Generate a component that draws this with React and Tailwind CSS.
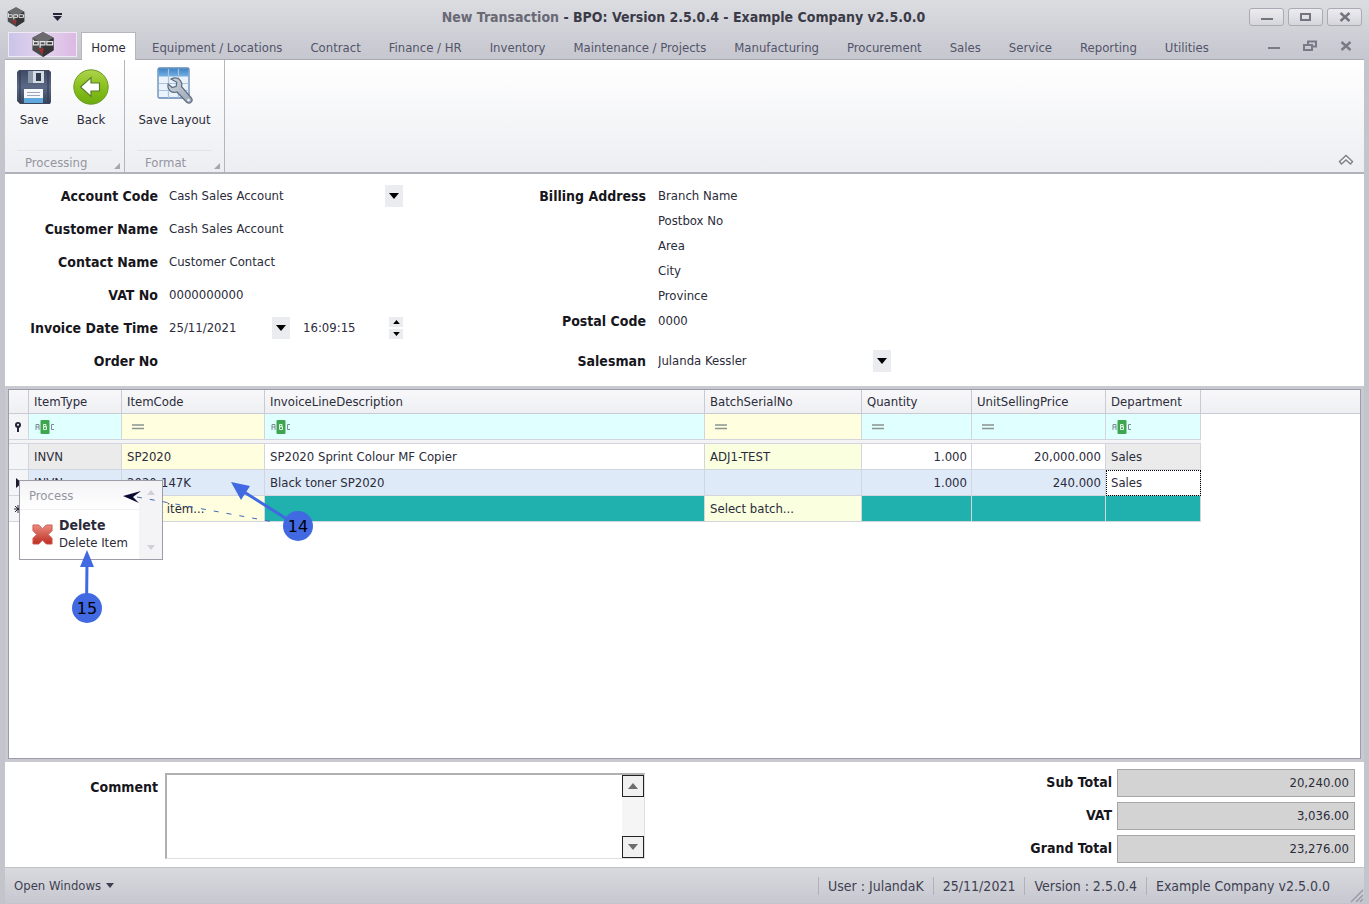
import React from "react";

const rowsTop = [
  ["Account Code", "Cash Sales Account", "account"],
  ["Customer Name", "Cash Sales Account", "customer"],
  ["Contact Name", "Customer Contact", "contact"],
  ["VAT No", "0000000000", "vat"],
];
const tabs = ["Equipment / Locations", "Contract", "Finance / HR", "Inventory", "Maintenance / Projects", "Manufacturing", "Procurement", "Sales", "Service", "Reporting", "Utilities"];

function Hex({ className }) {
  return (
    <svg viewBox="0 0 24 26" className={className} aria-hidden="true">
      <path d="M12 0 23 6v13l-11 7L1 19V6z" fill="#4a4a4c" />
      <path d="M12 0 23 6 12 12 1 6z" fill="#6b6b6d" />
      <path d="M12 12 23 6v13l-11 7z" fill="#353537" />
      <path d="M2 8v5.500h5v-3.500H2M9 16.500V10h5v3.500H9M16 10h6v3.500h-6z" fill="none" stroke="#e4e4e4" strokeWidth="1.300" />
      <path d="m8 17 3 4 1-4" fill="none" stroke="#b02a2a" strokeWidth="1.800" />
    </svg>
  );
}
function Down({ size = "h-[6px] w-[10px]" }) {
  return <svg viewBox="0 0 10 6" className={size} aria-hidden="true"><path d="M0 0h10L5 6z" fill="currentColor" /></svg>;
}
function Up({ size = "h-[6px] w-[10px]" }) {
  return <svg viewBox="0 0 10 6" className={size} aria-hidden="true"><path d="M0 6h10L5 0z" fill="currentColor" /></svg>;
}
function Disk() {
  return (
    <svg viewBox="0 0 34 34" className="size-[34px]" aria-hidden="true">
      <defs><linearGradient id="dk" x1="0" y1="0" x2="0" y2="1"><stop offset="0" stopColor="#3f4a64" /><stop offset=".5" stopColor="#5b6986" /><stop offset="1" stopColor="#39435b" /></linearGradient></defs>
      <path d="M2 0h30l2 2v30l-1 2H3l-3-3V2z" fill="url(#dk)" />
      <path d="M3 1v32M31 1v32" stroke="#2f384e" strokeWidth="1" />
      <path d="M11 1h16v12H11z" fill="#d5dbe3" />
      <path d="M11 1h5v12h-5z" fill="#8a97ab" />
      <path d="M19 3h5v8h-5z" fill="#313b52" />
      <path d="M7 19h19v14H7z" fill="#f6f8fb" />
      <path d="M7 28h19v5H7z" fill="#5fa9df" />
      <path d="M10 22.500h13M10 25.500h13" stroke="#9ba6b8" />
    </svg>
  );
}
function Back() {
  return (
    <svg viewBox="0 0 36 36" className="size-[36px]" aria-hidden="true">
      <defs><linearGradient id="bk" x1="0" y1="0" x2="0" y2="1"><stop offset="0" stopColor="#b0d24e" /><stop offset=".45" stopColor="#8cc320" /><stop offset="1" stopColor="#6cab0c" /></linearGradient></defs>
      <circle cx="18" cy="18" r="17.200" fill="url(#bk)" stroke="#6b9a2a" />
      <path d="M7.500 18 18 8.500v5.500h8.500v8H18v5.500z" fill="#fff" stroke="#5c7c2c" strokeWidth="1.200" />
    </svg>
  );
}
function Layout() {
  return (
    <svg viewBox="0 0 36 38" className="h-[38px] w-[36px]" aria-hidden="true">
      <defs>
        <linearGradient id="lh" x1="0" y1="0" x2="0" y2="1"><stop offset="0" stopColor="#3f82c4" /><stop offset="1" stopColor="#74b0e2" /></linearGradient>
        <linearGradient id="lw" x1="0" y1="0" x2="1" y2="1"><stop offset="0" stopColor="#d0d7e0" /><stop offset="1" stopColor="#98a4b3" /></linearGradient>
      </defs>
      <rect x="1" y="1" width="31" height="30" rx="1.500" fill="#eaf2fb" stroke="#6288b5" strokeWidth="1.300" />
      <path d="M1.500 1.500h30v8h-30z" fill="url(#lh)" />
      <path d="M11.500 2v29M21.500 2v29M2 16.500h30M2 23.500h30" stroke="#a9c2de" strokeWidth="1.200" />
      <path d="M14 12c4-2 8-1 10 2.500 1 2 1 3.700 .4 5L34.500 31c2 3-1.500 6.500-4.500 4.500L20 25c-3.500 1-7-.3-8.500-3.500-.7-1.500-.7-3-.3-4.500l4 3.500 4-1.300 .6-4z" fill="url(#lw)" stroke="#5c6a7d" strokeWidth="1.200" />
      <circle cx="31.500" cy="33" r="1.300" fill="#eef1f4" />
    </svg>
  );
}
function Abc() {
  return (
    <svg viewBox="0 0 20 14" className="ml-px h-[14px] w-[20px]" role="img" aria-label="Text filter">
      <rect x="5.500" y="0" width="9" height="14" rx="1" fill="#3fa650" />
      <path d="M1 10V4.500h3V10M1 7h3" fill="none" stroke="#7c8c92" />
      <path d="M8.500 4.500H11v2.200H8.500zM8.500 6.700h3v2.800h-3z" fill="none" stroke="#e6f7e6" />
      <path d="M19 4.500h-2.500v5H19" fill="none" stroke="#7c8c92" />
    </svg>
  );
}
function Eq() {
  return <svg viewBox="0 0 12 6" className="ml-[5px] h-[6px] w-[12px]" role="img" aria-label="Equals filter"><path d="M0 1h12M0 4.500h12" stroke="#8b9490" strokeWidth="1.300" /></svg>;
}
function WinButton({ label, children }) {
  return <button aria-label={label} className="flex h-[18px] w-[35px] items-center justify-center rounded-[3px] border border-[#a9aab3] bg-linear-to-b from-[#ececf0] to-[#d5d5dc] text-[#73747f]">{children}</button>;
}
function DropButton({ label }) {
  return <button type="button" aria-label={label} className="flex h-[22px] w-[18px] items-center justify-center bg-[#ebecef] text-black"><Down /></button>;
}
function Group({ title, children }) {
  return (
    <section className="flex flex-col border-r border-[#b4b5bd] px-[6px]">
      <div className="flex flex-1 pt-[7px]">{children}</div>
      <div className="relative mx-[6px] h-[22px] border-t border-[#e3e4e9] pl-[8px] leading-[24px] text-[#94959f]">
        {title}
        <svg viewBox="0 0 6 6" className="absolute -right-[8px] bottom-[3px] size-[6px]" aria-hidden="true"><path d="M6 0v6H0z" fill="#a4a5ad" /></svg>
      </div>
    </section>
  );
}
const cell = "border-r border-b border-[#d3d5de] py-0 pr-[4px] pl-[5px]";
const hd = "border-r border-b border-[#c9cad3] py-0 pr-[4px] pl-[5px] text-left font-normal";
const lbl = "text-right text-[14px] font-bold text-[#16161c]";
const inp = "h-[22px] min-w-0 bg-transparent p-0 outline-none";

export default function App() {
  return (
    <div className="relative flex min-h-screen flex-col border-x-[5px] border-b border-[#c3c4cc] bg-white font-['DejaVu_Sans_Condensed','DejaVu_Sans',sans-serif] text-[13px] leading-[18px] text-[#2b2b3a]">
      <header className="-mx-[5px] bg-linear-to-b from-[#dcdde1] to-[#c5c6ce] px-[5px]">
        <div className="flex h-[33px] items-center">
          <Hex className="ml-[2px] h-[20px] w-[18px]" />
          <button aria-label="Customize toolbar" className="ml-[28px] flex flex-col items-center gap-px text-[#25253a]">
            <span className="h-[2px] w-[9px] bg-current" />
            <svg viewBox="0 0 9 5" className="h-[5px] w-[9px]" aria-hidden="true"><path d="M0 0h9L4.500 5z" fill="currentColor" /></svg>
          </button>
          <h1 className="flex-1 pl-[68px] pr-[12px] text-center text-[14px] font-bold text-[#3b3b48]"><span className="text-[#686975]">New Transaction</span> - BPO: Version 2.5.0.4 - Example Company v2.5.0.0</h1>
          <div className="flex gap-[4px] pr-[2px]">
            <WinButton label="Minimize"><span className="mt-[5px] h-[2px] w-[12px] bg-current" /></WinButton>
            <WinButton label="Maximize"><span className="h-[8px] w-[11px] border-2 border-current" /></WinButton>
            <WinButton label="Close"><svg viewBox="0 0 12 10" className="h-[10px] w-[12px]" aria-hidden="true"><path d="m1.500 1 9 8m0-8-9 8" stroke="currentColor" strokeWidth="2.400" /></svg></WinButton>
          </div>
        </div>
        <nav className="flex h-[27px] items-end border-b border-[#a9aab3] text-[#53546a]">
          <button aria-label="Application menu" className="mr-[4px] mb-[2px] ml-[3px] flex h-[25px] w-[69px] items-center justify-center border border-[#f0e8f5] bg-linear-to-r from-[#cbc4e8] via-[#e2d3ee] to-[#dcb9e3]"><Hex className="h-[25px] w-[24px]" /></button>
          <button className="-mb-px h-[28px] w-[55px] border border-b-0 border-[#b5b6be] bg-white pt-[2px] text-[#2b2b3a]">Home</button>
          <div className="flex h-[27px] flex-1 items-center gap-[28px] pt-[5px] pl-[16px]">
            {tabs.map((t) => <button key={t} className="whitespace-nowrap">{t}</button>)}
          </div>
          <div className="flex h-[27px] items-center gap-[23px] pr-[12px] text-[#797a85]">
            <button aria-label="Minimize document"><span className="mt-[5px] block h-[2px] w-[12px] bg-current" /></button>
            <button aria-label="Restore document"><svg viewBox="0 0 14 12" className="h-[12px] w-[14px]" aria-hidden="true"><path d="M1 5h8v5H1zM5 4V1.500h8v5h-3" fill="none" stroke="currentColor" strokeWidth="2" /></svg></button>
            <button aria-label="Close document"><svg viewBox="0 0 12 10" className="h-[10px] w-[12px]" aria-hidden="true"><path d="m1.500 1 9 8m0-8-9 8" stroke="currentColor" strokeWidth="2.400" /></svg></button>
          </div>
        </nav>
      </header>

      <div className="flex h-[114px] border-b-2 border-[#b1b2ba] bg-linear-to-b from-white to-[#edeef2]">
        <Group title="Processing">
          <button className="flex h-[62px] w-[46px] flex-col items-center justify-between pt-[3px]"><Disk /><span>Save</span></button>
          <button className="mr-[4px] ml-[11px] flex h-[62px] w-[46px] flex-col items-center justify-between pt-[2px]"><Back /><span>Back</span></button>
        </Group>
        <Group title="Format">
          <button className="flex h-[62px] w-[87px] flex-col items-center justify-between whitespace-nowrap"><Layout /><span>Save Layout</span></button>
        </Group>
        <button aria-label="Collapse ribbon" className="mt-auto mr-[10px] mb-[6px] ml-auto text-[#7e7f89]">
          <svg viewBox="0 0 16 12" className="h-[12px] w-[16px]" aria-hidden="true"><path d="M1.500 7.500 8 1.500l6.500 6-2 2.500L8 6l-4.500 4z" fill="#f4f4f7" stroke="currentColor" strokeWidth="1.400" /></svg>
        </button>
      </div>

      <form className="flex h-[212px] pt-[11px] leading-[22px]">
        <div className="grid w-[483px] auto-rows-[33px] grid-cols-[153px_1fr] gap-x-[11px]">
          {rowsTop.map(([l, v, id]) => (
            <React.Fragment key={id}>
              <label htmlFor={id} className={lbl}>{l}</label>
              <div className="flex items-start">
                <input id={id} defaultValue={v} className={inp + " w-[216px]"} />
                {id === "account" && <DropButton label="Choose account" />}
              </div>
            </React.Fragment>
          ))}
          <label htmlFor="date" className={lbl}>Invoice Date Time</label>
          <div className="flex items-start">
            <input id="date" defaultValue="25/11/2021" className={inp + " w-[103px]"} />
            <DropButton label="Choose date" />
            <input aria-label="Invoice time" defaultValue="16:09:15" className={inp + " ml-[13px] w-[86px]"} />
            <span className="flex flex-col gap-[2px]">
              <button type="button" aria-label="Later" className="flex h-[10px] w-[14px] items-center justify-center bg-[#ebecef] text-black"><Up size="h-[4px] w-[7px]" /></button>
              <button type="button" aria-label="Earlier" className="flex h-[10px] w-[14px] items-center justify-center bg-[#ebecef] text-black"><Down size="h-[4px] w-[7px]" /></button>
            </span>
          </div>
          <label htmlFor="order" className={lbl}>Order No</label>
          <input id="order" className={inp} />
        </div>
        <div className="grid auto-rows-[25px] grid-cols-[158px_1fr] gap-x-[12px]">
          <label htmlFor="b0" className={lbl}>Billing Address</label>
          <input id="b0" defaultValue="Branch Name" className={inp} />
          {["Postbox No", "Area", "City", "Province"].map((t) => <input key={t} aria-label={t} defaultValue={t} className={inp + " col-start-2"} />)}
          <label htmlFor="postal" className={lbl}>Postal Code</label>
          <input id="postal" defaultValue="0000" className={inp} />
          <label htmlFor="salesman" className={lbl + " pt-[15px]"}>Salesman</label>
          <div className="flex items-start pt-[15px]">
            <input id="salesman" defaultValue="Julanda Kessler" className={inp + " w-[215px]"} />
            <DropButton label="Choose salesman" />
          </div>
        </div>
      </form>

      <main className="relative flex min-h-[376px] flex-1 border-[3px] border-[#c8c9d1] bg-white">
        <div className="flex-1 border border-[#9c9da8]">
          <div className="flex">
            <table className="w-[1192px] table-fixed border-separate border-spacing-0">
              <colgroup><col className="w-[20px]" /><col className="w-[93px]" /><col className="w-[143px]" /><col className="w-[440px]" /><col className="w-[157px]" /><col className="w-[110px]" /><col className="w-[134px]" /><col className="w-[95px]" /></colgroup>
              <thead>
                <tr className="h-[24px] bg-linear-to-b from-[#f8f8fa] to-[#eeeff2]">
                  <th className={hd} aria-label="Row state"></th>
                  {["ItemType", "ItemCode", "InvoiceLineDescription", "BatchSerialNo", "Quantity", "UnitSellingPrice", "Department"].map((h) => <th key={h} className={hd}>{h}</th>)}
                </tr>
              </thead>
              <tbody>
                <tr className="h-[26px] bg-[#e0ffff]">
                  <td className={cell + " bg-[#f4f5f7]"}><svg viewBox="0 0 8 10" className="h-[10px] w-[8px]" aria-hidden="true"><circle cx="4" cy="3" r="3" fill="#25253a" /><circle cx="4" cy="2.800" r="1" fill="#fff" /><path d="M4 5v5" stroke="#25253a" strokeWidth="2" /></svg></td>
                  <td className={cell}><Abc /></td><td className={cell + " bg-[#ffffe0]"}><Eq /></td><td className={cell}><Abc /></td><td className={cell + " bg-[#ffffe0]"}><Eq /></td><td className={cell}><Eq /></td><td className={cell}><Eq /></td><td className={cell}><Abc /></td>
                </tr>
                <tr className="h-[4px]"><td colSpan={8} className="border-b border-[#d3d5de] bg-[#f4f4f7] p-0"></td></tr>
                <tr className="h-[26px]">
                  <td className={cell + " bg-[#f4f5f7]"}></td><td className={cell + " bg-[#ebebeb]"}>INVN</td><td className={cell + " bg-[#ffffe0]"}>SP2020</td><td className={cell}>SP2020 Sprint Colour MF Copier</td><td className={cell + " bg-[#faffe0]"}>ADJ1-TEST</td><td className={cell + " text-right"}>1.000</td><td className={cell + " text-right"}>20,000.000</td><td className={cell + " bg-[#ebebeb]"}>Sales</td>
                </tr>
                <tr className="h-[26px] bg-[#dfeaf8]">
                  <td className={cell + " bg-[#f4f5f7]"}><svg viewBox="0 0 6 10" className="ml-[2px] h-[10px] w-[6px]" aria-hidden="true"><path d="M0 0v10l6-5z" fill="#1c1c2a" /></svg></td><td className={cell}>INVN</td><td className={cell}>2020-147K</td><td className={cell}>Black toner SP2020</td><td className={cell}></td><td className={cell + " text-right"}>1.000</td><td className={cell + " text-right"}>240.000</td><td className={cell + " bg-white outline-1 -outline-offset-1 outline-dotted outline-black"}>Sales</td>
                </tr>
                <tr className="h-[26px] bg-[#20b0ae]">
                  <td className={cell + " bg-[#f4f5f7]"}>
                    <svg viewBox="0 0 8 8" className="h-[8px] w-[8px]" aria-hidden="true"><path d="M4 0v8M0 4h8M1 1l6 6M7 1 1 7" stroke="#2b2b3a" /></svg>
                  </td>
                  <td className={cell}></td><td className={cell + " bg-[#ffffe0]"}>Select item...</td><td className={cell}></td><td className={cell + " bg-[#faffe0]"}>Select batch...</td><td className={cell}></td><td className={cell}></td><td className={cell}></td>
                </tr>
              </tbody>
            </table>
            <div className="h-[24px] flex-1 border-b border-[#c9cad3] bg-linear-to-b from-[#f8f8fa] to-[#eeeff2]" />
          </div>
        </div>

        <div role="menu" className="absolute top-[91px] left-[11px] flex h-[80px] w-[144px] border border-[#9c9da8] bg-white">
          <div className="flex-1">
            <div className="h-[29px] border-b border-[#f0f0f3] bg-linear-to-b from-[#f3f3f6] to-white pl-[9px] leading-[30px] text-[#94959f]">Process</div>
            <button role="menuitem" className="flex items-center gap-[6px] pt-[7px] pl-[12px] text-left leading-[17px]">
              <svg viewBox="0 0 22 22" className="size-[21px]" aria-hidden="true">
                <defs><linearGradient id="rx" x1="0" y1="0" x2="0" y2="1"><stop offset="0" stopColor="#e98d80" /><stop offset="1" stopColor="#bd2c20" /></linearGradient></defs>
                <path d="M1 1h6l4 4 4-4h6v6l-4 4 4 4v6h-6l-4-4-4 4H1v-6l4-4-4-4z" fill="url(#rx)" stroke="#d0594e" />
              </svg>
              <span className="whitespace-nowrap"><b className="block text-[14px] leading-[17px]">Delete</b>Delete Item</span>
            </button>
          </div>
          <div className="flex w-[23px] flex-col items-center justify-between bg-[#f4f4f6] py-[9px] text-[#d0d1d7]"><Up size="h-[5px] w-[8px]" /><Down size="h-[5px] w-[8px]" /></div>
        </div>

        <svg viewBox="0 0 340 250" className="pointer-events-none absolute -top-[4px] -left-[8px] h-[250px] w-[340px]" aria-hidden="true">
          <path d="M137 112 274 137" stroke="#4169b5" strokeDasharray="5 8" />
          <path d="m123 111 18-5-8 6 6 6z" fill="#0a0a30" />
          <path d="M298 141 244 107M86.500 222l.5-44" stroke="#4169e1" strokeWidth="3" />
          <path d="m231 97 19 4-9 14zM87 165l7 17H80z" fill="#4169e1" />
          <circle cx="298" cy="141" r="15" fill="#4169e1" />
          <circle cx="87" cy="223" r="15" fill="#4169e1" />
          <g fill="#000" textAnchor="middle" fontFamily="DejaVu Sans" fontSize="16"><text x="298" y="147">14</text><text x="87" y="229">15</text></g>
        </svg>
      </main>

      <section className="flex h-[105px] justify-between pr-[9px]">
        <div className="flex">
          <label htmlFor="comment" className={lbl + " w-[153px] pt-[16px]"}>Comment</label>
          <div className="mt-[11px] ml-[7px] flex h-[86px] w-[480px] border border-t-2 border-l-2 border-[#dfdfdf] border-t-[#b0b0b0] border-l-[#b0b0b0]">
            <textarea id="comment" className="flex-1 resize-none outline-none" />
            <div className="flex w-[22px] flex-col justify-between bg-[#f5f5f5] text-[#6c6c6c]">
              <button type="button" aria-label="Scroll up" className="flex h-[22px] items-center justify-center border border-[#222] bg-[#f0f0f0]"><Up /></button>
              <button type="button" aria-label="Scroll down" className="flex h-[22px] items-center justify-center border border-[#222] bg-[#f0f0f0]"><Down /></button>
            </div>
          </div>
        </div>
        <div className="grid auto-rows-[28px] grid-cols-[90px_238px] gap-x-[5px] gap-y-[5px] pt-[7px]">
          {[["Sub Total", "20,240.00"], ["VAT", "3,036.00"], ["Grand Total", "23,276.00"]].map(([l, v]) => (
            <React.Fragment key={l}>
              <label htmlFor={l} className={lbl + " pt-[4px] whitespace-nowrap"}>{l}</label>
              <input id={l} readOnly value={v} className="min-w-0 border border-[#a6a6a6] bg-[#d3d3d3] px-[5px] text-right" />
            </React.Fragment>
          ))}
        </div>
      </section>

      <footer className="flex h-[36px] items-center border-t border-[#c0c1c9] bg-linear-to-b from-[#d9dade] to-[#c7c8d0] pl-[9px] text-[#3e3f52]">
        <button className="flex items-center gap-[5px]">Open Windows <Down size="h-[5px] w-[8px]" /></button>
        <div className="ml-auto flex text-[14px]">
          {["User : JulandaK", "25/11/2021", "Version : 2.5.0.4", "Example Company v2.5.0.0"].map((t) => <span key={t} className="border-l border-[#b0b1ba] px-[9px]">{t}</span>)}
        </div>
        <svg viewBox="0 0 14 14" className="mt-auto ml-[11px] h-[14px] w-[14px]" aria-hidden="true"><path d="M1 13 13 1M6 13l7-7M10 13l3-3" stroke="#9a9ba6" strokeWidth="1.500" /></svg>
      </footer>
    </div>
  );
}
